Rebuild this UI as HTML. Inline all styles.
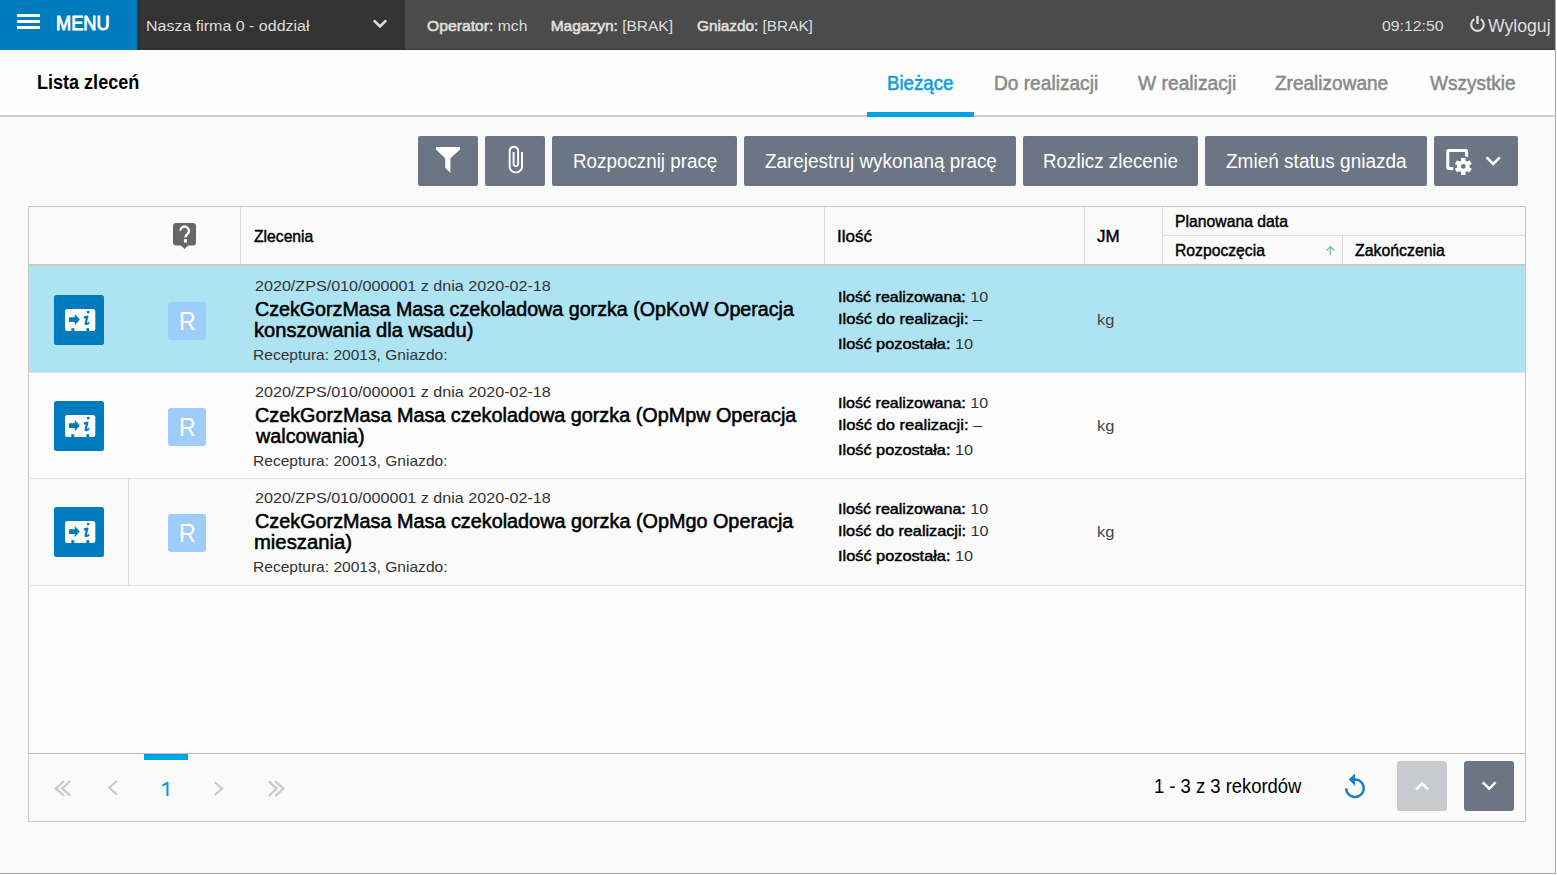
<!DOCTYPE html>
<html><head><meta charset="utf-8"><style>
html,body{margin:0;padding:0;}
body{width:1557px;height:875px;position:relative;overflow:hidden;background:#fff;font-family:"Liberation Sans",sans-serif;}
.a{position:absolute;box-sizing:border-box;}
.t{position:absolute;white-space:nowrap;transform-origin:0 0;font-family:"Liberation Sans",sans-serif;}
.m{color:#000;font-weight:400;-webkit-text-stroke:0.45px #000;}
.mw{font-weight:400;-webkit-text-stroke:0.65px #dedede;}
.btn{position:absolute;background:#6b7584;border-radius:2px;top:136px;height:50px;}
</style></head><body>
<!-- top bar -->
<div class="a" style="left:0;top:0;width:137px;height:50px;background:#007bbd"></div>
<div class="a" style="left:137px;top:0;width:268px;height:50px;background:#333"></div>
<div class="a" style="left:405px;top:0;width:1150px;height:50px;background:#4b4b4b"></div>
<div class="a" style="left:137px;top:49px;width:1418px;height:1px;background:#2e2e2e;opacity:.5"></div>
<div class="a" style="left:17px;top:14px;width:23px;height:3px;background:#fff"></div>
<div class="a" style="left:17px;top:20px;width:23px;height:3px;background:#fff"></div>
<div class="a" style="left:17px;top:26px;width:23px;height:3px;background:#fff"></div>
<svg class="a" style="left:0;top:0" width="1557" height="50">
  <polyline points="373.8,20.3 380,26.5 386.2,20.3" fill="none" stroke="#dedede" stroke-width="2.6"/>
  <path d="M1474.2,19.2 A6.3,6.3 0 1 0 1480.8,19.2" fill="none" stroke="#dedede" stroke-width="2.1"/>
  <line x1="1477.5" y1="15.9" x2="1477.5" y2="24" stroke="#dedede" stroke-width="2.4"/>
</svg>
<!-- title bar -->
<div class="a" style="left:0;top:50px;width:1555px;height:65px;background:#fdfdfd"></div>
<div class="a" style="left:0;top:115px;width:1555px;height:2px;background:#cfcfcf"></div>
<div class="a" style="left:867px;top:112px;width:107px;height:5px;background:#00a3e0"></div>
<!-- content bg -->
<div class="a" style="left:0;top:117px;width:1555px;height:756px;background:#f9faf9"></div>
<!-- frame -->
<div class="a" style="left:1555px;top:0;width:1px;height:874px;background:#a9a9a9"></div>
<div class="a" style="left:0;top:873px;width:1556px;height:1px;background:#a9a9a9"></div>
<!-- toolbar buttons -->
<div class="btn" style="left:418px;width:60px"></div>
<div class="btn" style="left:485px;width:60px"></div>
<div class="btn" style="left:552px;width:185px"></div>
<div class="btn" style="left:744px;width:272px"></div>
<div class="btn" style="left:1023px;width:175px"></div>
<div class="btn" style="left:1205px;width:222px"></div>
<div class="btn" style="left:1434px;width:84px"></div>
<svg class="a" style="left:0;top:120px" width="1557" height="80" viewBox="0 120 1557 80">
  <polygon points="436,147 460,147 460,149.6 450.4,158.2 450.4,172.8 445.2,167.8 445.2,158.2 436,149.6" fill="#fff"/>
  <g transform="translate(499.6,144.6) scale(1.3,1.25)">
    <path d="M16.5 6v11.5c0 2.21-1.79 4-4 4s-4-1.79-4-4V5c0-1.38 1.12-2.5 2.5-2.5s2.5 1.12 2.5 2.5v10.5c0 .55-.45 1-1 1s-1-.45-1-1V6H10v9.5c0 1.38 1.12 2.5 2.5 2.5s2.5-1.12 2.5-2.5V5c0-2.21-1.79-4-4-4S7 2.79 7 5v12.5c0 3.04 2.46 5.5 5.5 5.5s5.5-2.46 5.5-5.5V6h-1.5z" fill="#fff"/>
  </g>
  <rect x="1447.8" y="150.5" width="18.8" height="18.1" rx="1" fill="none" stroke="#fff" stroke-width="3"/>
  <g transform="translate(1463.3,166.4)">
    <circle r="10.4" fill="#6b7584"/>
    <circle r="6.2" fill="#fff"/>
    <rect x="-2.2" y="-8.5" width="4.4" height="17" fill="#fff"/>
    <rect x="-2.2" y="-8.5" width="4.4" height="17" fill="#fff" transform="rotate(60)"/>
    <rect x="-2.2" y="-8.5" width="4.4" height="17" fill="#fff" transform="rotate(120)"/>
    <circle r="2.4" fill="#6b7584"/>
  </g>
  <polyline points="1486.6,157.3 1493.2,163.9 1499.8,157.3" fill="none" stroke="#fff" stroke-width="2.6"/>
</svg>
<!-- table -->
<div class="a" style="left:28px;top:206px;width:1498px;height:616px;border:1px solid #c8c8c8;background:#f9faf9"></div>
<div class="a" style="left:29px;top:264px;width:1496px;height:2px;background:#c9c9c9"></div>
<div class="a" style="left:240px;top:207px;width:1px;height:57px;background:#dcdcdc"></div>
<div class="a" style="left:824px;top:207px;width:1px;height:57px;background:#dcdcdc"></div>
<div class="a" style="left:1084px;top:207px;width:1px;height:57px;background:#dcdcdc"></div>
<div class="a" style="left:1162px;top:207px;width:1px;height:57px;background:#dcdcdc"></div>
<div class="a" style="left:1163px;top:235px;width:362px;height:1px;background:#dcdcdc"></div>
<div class="a" style="left:1342px;top:236px;width:1px;height:28px;background:#dcdcdc"></div>
<svg class="a" style="left:160px;top:210px" width="40" height="45" viewBox="160 210 40 45">
  <rect x="173" y="223" width="23" height="22.4" rx="3" fill="#666"/>
  <polygon points="180.6,245 184.5,249 188.4,245" fill="#666"/>
  <path d="M180.3,230.8 A4.3,4.3 0 1 1 187.3,234.2 Q185.4,235.4 185.4,237.6" fill="none" stroke="#fff" stroke-width="2.3"/>
  <rect x="183.9" y="239.2" width="3" height="3.4" fill="#fff"/>
</svg>
<svg class="a" style="left:1320px;top:240px" width="20" height="20" viewBox="1320 240 20 20">
  <polyline points="1326.4,250.6 1330.4,246.5 1334.4,250.6" fill="none" stroke="#74c2a0" stroke-width="1.3"/>
  <line x1="1330.4" y1="246.5" x2="1330.4" y2="255" stroke="#74c2a0" stroke-width="1.3"/>
</svg>
<!-- rows -->
<div class="a" style="left:29px;top:266px;width:1496px;height:106px;background:#ade3f3"></div>
<div class="a" style="left:29px;top:372px;width:1496px;height:1px;background:#dfdfdf"></div>
<div class="a" style="left:29px;top:373px;width:1496px;height:105px;background:#fcfcfc"></div>
<div class="a" style="left:29px;top:478px;width:1496px;height:1px;background:#dfdfdf"></div>
<div class="a" style="left:29px;top:585px;width:1496px;height:1px;background:#dfdfdf"></div>
<div class="a" style="left:128px;top:479px;width:1px;height:106px;background:#e0e0e0"></div>
<div class="a" style="left:29px;top:586px;width:1496px;height:167px;background:#fcfcfc"></div>
<div class="a" style="left:29px;top:753px;width:1496px;height:1px;background:#bdbdbd"></div>
<div class="a" style="left:144px;top:754px;width:44px;height:6px;background:#00a3e0"></div>
<svg class="a" style="left:50px;top:290px" width="60" height="60" viewBox="50 290 60 60">
  <rect x="54" y="295" width="50" height="50" rx="2.5" fill="#007bbd"/>
  <rect x="65" y="309" width="30.3" height="22" rx="2.5" fill="#fff"/>
  <rect x="71.3" y="328.2" width="3" height="3" fill="#007bbd"/>
  <rect x="86.3" y="328.2" width="3" height="3" fill="#007bbd"/>
  <rect x="69" y="317.2" width="6.5" height="4.8" fill="#007bbd"/>
  <polygon points="74.8,314 79.8,319.6 74.8,325.2" fill="#007bbd"/>
  <circle cx="88.2" cy="312.1" r="1.4" fill="#007bbd"/>
  <path d="M83.8,317.4 L87.4,316.6 L85.6,323.2 Q85.3,324.5 86.6,324.1 L89.2,322.8" fill="none" stroke="#007bbd" stroke-width="2.1" stroke-linejoin="round"/>
</svg>
<div class="a" style="left:168px;top:302px;width:38px;height:38px;border-radius:3px;background:#9ecdfc"></div>
<svg class="a" style="left:50px;top:396px" width="60" height="60" viewBox="50 290 60 60">
  <rect x="54" y="295" width="50" height="50" rx="2.5" fill="#007bbd"/>
  <rect x="65" y="309" width="30.3" height="22" rx="2.5" fill="#fff"/>
  <rect x="71.3" y="328.2" width="3" height="3" fill="#007bbd"/>
  <rect x="86.3" y="328.2" width="3" height="3" fill="#007bbd"/>
  <rect x="69" y="317.2" width="6.5" height="4.8" fill="#007bbd"/>
  <polygon points="74.8,314 79.8,319.6 74.8,325.2" fill="#007bbd"/>
  <circle cx="88.2" cy="312.1" r="1.4" fill="#007bbd"/>
  <path d="M83.8,317.4 L87.4,316.6 L85.6,323.2 Q85.3,324.5 86.6,324.1 L89.2,322.8" fill="none" stroke="#007bbd" stroke-width="2.1" stroke-linejoin="round"/>
</svg>
<div class="a" style="left:168px;top:408px;width:38px;height:38px;border-radius:3px;background:#9ecdfc"></div>
<svg class="a" style="left:50px;top:502px" width="60" height="60" viewBox="50 290 60 60">
  <rect x="54" y="295" width="50" height="50" rx="2.5" fill="#007bbd"/>
  <rect x="65" y="309" width="30.3" height="22" rx="2.5" fill="#fff"/>
  <rect x="71.3" y="328.2" width="3" height="3" fill="#007bbd"/>
  <rect x="86.3" y="328.2" width="3" height="3" fill="#007bbd"/>
  <rect x="69" y="317.2" width="6.5" height="4.8" fill="#007bbd"/>
  <polygon points="74.8,314 79.8,319.6 74.8,325.2" fill="#007bbd"/>
  <circle cx="88.2" cy="312.1" r="1.4" fill="#007bbd"/>
  <path d="M83.8,317.4 L87.4,316.6 L85.6,323.2 Q85.3,324.5 86.6,324.1 L89.2,322.8" fill="none" stroke="#007bbd" stroke-width="2.1" stroke-linejoin="round"/>
</svg>
<div class="a" style="left:168px;top:514px;width:38px;height:38px;border-radius:3px;background:#9ecdfc"></div>
<svg class="a" style="left:40px;top:765px" width="260" height="45" viewBox="40 765 260 45">
  <g fill="none" stroke="#cacaca" stroke-width="2.2">
   <polyline points="64,781 55.8,788.4 64,795.8"/>
   <polyline points="70.4,781 62.2,788.4 70.4,795.8"/>
   <polyline points="116.9,781 109.2,787.8 116.9,794.6"/>
   <polyline points="214.8,782.2 222,788.6 214.8,795"/>
   <polyline points="268.8,781.2 276.5,788.6 268.8,796"/>
   <polyline points="275.3,781.2 283.5,788.6 275.3,796"/>
  </g>
</svg>
<svg class="a" style="left:1340px;top:772px" width="30" height="30" viewBox="0 0 24 24">
  <path d="M12 5V1L7 6l5 5V7c3.31 0 6 2.69 6 6s-2.69 6-6 6-6-2.69-6-6H4c0 4.42 3.58 8 8 8s8-3.58 8-8-3.58-8-8-8z" fill="#1a80c2"/>
</svg>
<div class="a" style="left:1397px;top:761px;width:50px;height:50px;border-radius:3px;background:#c9cacd"></div>
<div class="a" style="left:1464px;top:761px;width:50px;height:50px;border-radius:3px;background:#6b7584"></div>
<svg class="a" style="left:1390px;top:760px" width="130" height="50" viewBox="1390 760 130 50">
  <polyline points="1416,789.6 1422.1,783.5 1428.2,789.6" fill="none" stroke="#fff" stroke-width="2.5"/>
  <polyline points="1482.8,782.3 1489.2,788.7 1495.6,782.3" fill="none" stroke="#fff" stroke-width="2.5"/>
</svg>
<svg class="a" style="left:155px;top:775px" width="20" height="25" viewBox="155 775 20 25">
  <rect x="166.4" y="782" width="2.1" height="14" fill="#0a9ad8"/>
  <path d="M162.4,785.6 L167.6,782.6" stroke="#0a9ad8" stroke-width="1.9" fill="none"/>
</svg>
<span class="t" style="left:56.09px;top:13px;font-size:20px;line-height:20px;font-weight:400;color:#fff;transform:scaleX(0.9123);-webkit-text-stroke:0.9px #fff;">MENU</span>
<span class="t" style="left:145.97px;top:18px;font-size:15.5px;line-height:15.5px;font-weight:400;color:#dedede;transform:scaleX(1.0316);">Nasza firma 0 - oddzia&#322;</span>
<span class="t" style="left:427.00px;top:18px;font-size:15.5px;line-height:15.5px;font-weight:400;color:#dedede;transform:scaleX(1.0131);"><b class="mw">Operator:</b> mch</span>
<span class="t" style="left:550.70px;top:18px;font-size:15.5px;line-height:15.5px;font-weight:400;color:#dedede;"><b class="mw">Magazyn:</b> [BRAK]</span>
<span class="t" style="left:696.50px;top:18px;font-size:15.5px;line-height:15.5px;font-weight:400;color:#dedede;transform:scaleX(0.9888);"><b class="mw">Gniazdo:</b> [BRAK]</span>
<span class="t" style="left:1382.00px;top:18px;font-size:15.5px;line-height:15.5px;font-weight:400;color:#dedede;transform:scaleX(1.0200);">09:12:50</span>
<span class="t" style="left:1487.60px;top:17px;font-size:18.5px;line-height:18.5px;font-weight:400;color:#dedede;transform:scaleX(0.9538);">Wyloguj</span>
<span class="t" style="left:36.80px;top:72px;font-size:20px;line-height:20px;font-weight:700;color:#000;transform:scaleX(0.9018);">Lista zlece&#324;</span>
<span class="t" style="left:886.77px;top:73px;font-size:20px;line-height:20px;font-weight:400;color:#0aa0dc;transform:scaleX(0.9343);-webkit-text-stroke:0.55px #0aa0dc;">Bie&#380;&#261;ce</span>
<span class="t" style="left:993.54px;top:73px;font-size:20px;line-height:20px;font-weight:400;color:#8a8a8a;transform:scaleX(0.9561);-webkit-text-stroke:0.55px #8a8a8a;">Do realizacji</span>
<span class="t" style="left:1137.70px;top:73px;font-size:20px;line-height:20px;font-weight:400;color:#8a8a8a;transform:scaleX(0.9624);-webkit-text-stroke:0.55px #8a8a8a;">W realizacji</span>
<span class="t" style="left:1275.20px;top:73px;font-size:20px;line-height:20px;font-weight:400;color:#8a8a8a;transform:scaleX(0.9513);-webkit-text-stroke:0.55px #8a8a8a;">Zrealizowane</span>
<span class="t" style="left:1429.50px;top:73px;font-size:20px;line-height:20px;font-weight:400;color:#8a8a8a;transform:scaleX(0.9511);-webkit-text-stroke:0.55px #8a8a8a;">Wszystkie</span>
<span class="t" style="left:572.66px;top:151px;font-size:20px;line-height:20px;font-weight:400;color:#fff;transform:scaleX(0.9408);">Rozpocznij prac&#281;</span>
<span class="t" style="left:764.70px;top:151px;font-size:20px;line-height:20px;font-weight:400;color:#fff;transform:scaleX(0.9437);">Zarejestruj wykonan&#261; prac&#281;</span>
<span class="t" style="left:1043.16px;top:151px;font-size:20px;line-height:20px;font-weight:400;color:#fff;transform:scaleX(0.9408);">Rozlicz zlecenie</span>
<span class="t" style="left:1225.80px;top:151px;font-size:20px;line-height:20px;font-weight:400;color:#fff;transform:scaleX(0.9505);">Zmie&#324; status gniazda</span>
<span class="t" style="left:253.50px;top:228px;font-size:17px;line-height:17px;font-weight:400;color:#000;transform:scaleX(0.9231);-webkit-text-stroke:0.45px #000;">Zlecenia</span>
<span class="t" style="left:837.00px;top:228px;font-size:17px;line-height:17px;font-weight:400;color:#000;-webkit-text-stroke:0.45px #000;">Ilo&#347;&#263;</span>
<span class="t" style="left:1097.40px;top:228px;font-size:17px;line-height:17px;font-weight:400;color:#000;transform:scaleX(0.9955);-webkit-text-stroke:0.45px #000;">JM</span>
<span class="t" style="left:1174.67px;top:213px;font-size:17px;line-height:17px;font-weight:400;color:#000;transform:scaleX(0.9262);-webkit-text-stroke:0.45px #000;">Planowana data</span>
<span class="t" style="left:1174.68px;top:242px;font-size:17px;line-height:17px;font-weight:400;color:#000;transform:scaleX(0.9237);-webkit-text-stroke:0.45px #000;">Rozpocz&#281;cia</span>
<span class="t" style="left:1355.40px;top:242px;font-size:17px;line-height:17px;font-weight:400;color:#000;transform:scaleX(0.9330);-webkit-text-stroke:0.45px #000;">Zako&#324;czenia</span>
<span class="t" style="left:254.50px;top:278px;font-size:15px;line-height:15px;font-weight:400;color:#333;transform:scaleX(1.0745);">2020/ZPS/010/000001 z dnia 2020-02-18</span>
<span class="t" style="left:254.50px;top:299px;font-size:20px;line-height:20px;font-weight:400;color:#000;transform:scaleX(0.9834);font-weight:500;-webkit-text-stroke:0.55px #000;">CzekGorzMasa Masa czekoladowa gorzka (OpKoW Operacja</span>
<span class="t" style="left:254.49px;top:320px;font-size:20px;line-height:20px;font-weight:400;color:#000;transform:scaleX(1.0069);-webkit-text-stroke:0.55px #000;">konszowania dla wsadu)</span>
<span class="t" style="left:253.46px;top:347px;font-size:15px;line-height:15px;font-weight:400;color:#333;transform:scaleX(1.0366);">Receptura: 20013, Gniazdo:</span>
<span class="t" style="left:837.63px;top:289px;font-size:15px;line-height:15px;font-weight:400;color:#333;transform:scaleX(1.0719);"><b class="m">Ilo&#347;&#263; realizowana:</b> 10</span>
<span class="t" style="left:837.60px;top:311px;font-size:15px;line-height:15px;font-weight:400;color:#333;transform:scaleX(1.1023);"><b class="m">Ilo&#347;&#263; do realizacji:</b> &ndash;</span>
<span class="t" style="left:837.61px;top:336px;font-size:15px;line-height:15px;font-weight:400;color:#333;transform:scaleX(1.0878);"><b class="m">Ilo&#347;&#263; pozosta&#322;a:</b> 10</span>
<span class="t" style="left:1096.80px;top:312px;font-size:15px;line-height:15px;font-weight:400;color:#444;transform:scaleX(1.1000);">kg</span>
<span class="t" style="left:254.50px;top:384px;font-size:15px;line-height:15px;font-weight:400;color:#333;transform:scaleX(1.0745);">2020/ZPS/010/000001 z dnia 2020-02-18</span>
<span class="t" style="left:254.50px;top:405px;font-size:20px;line-height:20px;font-weight:400;color:#000;transform:scaleX(0.9898);font-weight:500;-webkit-text-stroke:0.55px #000;">CzekGorzMasa Masa czekoladowa gorzka (OpMpw Operacja</span>
<span class="t" style="left:256.49px;top:426px;font-size:20px;line-height:20px;font-weight:400;color:#000;transform:scaleX(0.9874);-webkit-text-stroke:0.55px #000;">walcowania)</span>
<span class="t" style="left:253.46px;top:453px;font-size:15px;line-height:15px;font-weight:400;color:#333;transform:scaleX(1.0366);">Receptura: 20013, Gniazdo:</span>
<span class="t" style="left:837.63px;top:395px;font-size:15px;line-height:15px;font-weight:400;color:#333;transform:scaleX(1.0719);"><b class="m">Ilo&#347;&#263; realizowana:</b> 10</span>
<span class="t" style="left:837.60px;top:417px;font-size:15px;line-height:15px;font-weight:400;color:#333;transform:scaleX(1.1023);"><b class="m">Ilo&#347;&#263; do realizacji:</b> &ndash;</span>
<span class="t" style="left:837.61px;top:442px;font-size:15px;line-height:15px;font-weight:400;color:#333;transform:scaleX(1.0878);"><b class="m">Ilo&#347;&#263; pozosta&#322;a:</b> 10</span>
<span class="t" style="left:1096.80px;top:418px;font-size:15px;line-height:15px;font-weight:400;color:#444;transform:scaleX(1.1000);">kg</span>
<span class="t" style="left:254.50px;top:490px;font-size:15px;line-height:15px;font-weight:400;color:#333;transform:scaleX(1.0745);">2020/ZPS/010/000001 z dnia 2020-02-18</span>
<span class="t" style="left:254.50px;top:511px;font-size:20px;line-height:20px;font-weight:400;color:#000;transform:scaleX(0.9904);font-weight:500;-webkit-text-stroke:0.55px #000;">CzekGorzMasa Masa czekoladowa gorzka (OpMgo Operacja</span>
<span class="t" style="left:254.49px;top:532px;font-size:20px;line-height:20px;font-weight:400;color:#000;transform:scaleX(1.0126);-webkit-text-stroke:0.55px #000;">mieszania)</span>
<span class="t" style="left:253.46px;top:559px;font-size:15px;line-height:15px;font-weight:400;color:#333;transform:scaleX(1.0366);">Receptura: 20013, Gniazdo:</span>
<span class="t" style="left:837.63px;top:501px;font-size:15px;line-height:15px;font-weight:400;color:#333;transform:scaleX(1.0719);"><b class="m">Ilo&#347;&#263; realizowana:</b> 10</span>
<span class="t" style="left:837.62px;top:523px;font-size:15px;line-height:15px;font-weight:400;color:#333;transform:scaleX(1.0819);"><b class="m">Ilo&#347;&#263; do realizacji:</b> 10</span>
<span class="t" style="left:837.61px;top:548px;font-size:15px;line-height:15px;font-weight:400;color:#333;transform:scaleX(1.0878);"><b class="m">Ilo&#347;&#263; pozosta&#322;a:</b> 10</span>
<span class="t" style="left:1096.80px;top:524px;font-size:15px;line-height:15px;font-weight:400;color:#444;transform:scaleX(1.1000);">kg</span>
<span class="t" style="left:179.15px;top:309px;font-size:25px;line-height:25px;font-weight:400;color:#fff;transform:scaleX(0.9267);">R</span>
<span class="t" style="left:179.15px;top:415px;font-size:25px;line-height:25px;font-weight:400;color:#fff;transform:scaleX(0.9267);">R</span>
<span class="t" style="left:179.15px;top:521px;font-size:25px;line-height:25px;font-weight:400;color:#fff;transform:scaleX(0.9267);">R</span>
<span class="t" style="left:1153.68px;top:776px;font-size:20px;line-height:20px;font-weight:400;color:#000;transform:scaleX(0.9206);">1 - 3 z 3 rekord&oacute;w</span>
</body></html>
